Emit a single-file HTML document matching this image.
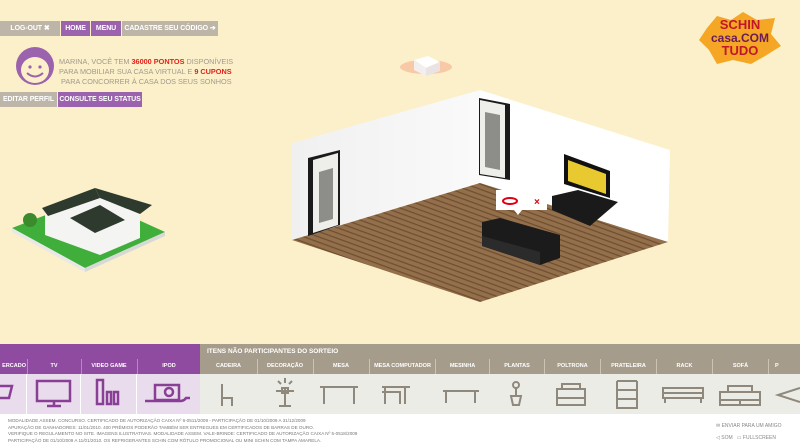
<!DOCTYPE html>
<html><head><meta charset="utf-8"><style>
*{margin:0;padding:0;box-sizing:border-box}
body{width:800px;height:448px;overflow:hidden;background:#fbf0c9;font-family:"Liberation Sans",sans-serif;position:relative}
.a{position:absolute}
.btn{position:absolute;height:15px;font-size:7px;font-weight:bold;color:#fff;line-height:15px;text-align:center;letter-spacing:-.1px}
.g{background:#bdb6a8}.p{background:#9b62ad}
.msg{position:absolute;left:59px;font-size:7.3px;color:#a39a8c;line-height:10px}
.msg b{color:#e2231a}
.hd{position:absolute;top:359px;height:15px;font-size:5.5px;font-weight:bold;color:#fff;line-height:15px;text-align:center;white-space:nowrap;overflow:hidden}
.foot{position:absolute;left:8px;top:418px;font-size:4.6px;color:#777;line-height:6.6px;white-space:nowrap}
</style></head><body>
<div class="a" style="left:0;top:414px;width:800px;height:34px;background:#fff"></div>
<div class="btn g" style="left:0;top:21px;width:60px">LOG-OUT ✖</div>
<div class="btn p" style="left:61px;top:21px;width:29px">HOME</div>
<div class="btn p" style="left:91px;top:21px;width:30px">MENU</div>
<div class="btn g" style="left:122px;top:21px;width:96px">CADASTRE SEU CÓDIGO ➔</div>
<svg class="a" style="left:14px;top:46px" width="46" height="40" viewBox="0 0 46 40">
<circle cx="21" cy="20" r="19" fill="#9b62ad"/>
<ellipse cx="21" cy="24" rx="14" ry="13" fill="#fbf0c9"/>
<circle cx="16" cy="21" r="1.6" fill="#9b62ad"/><circle cx="26" cy="21" r="1.6" fill="#9b62ad"/>
<path d="M13 27 Q21 34 29 27" stroke="#9b62ad" stroke-width="2" fill="none"/></svg>
<div class="msg" style="top:57px">MARINA, VOCÊ TEM <b>36000 PONTOS</b> DISPONÍVEIS</div>
<div class="msg" style="top:67px">PARA MOBILIAR SUA CASA VIRTUAL E <b>9 CUPONS</b></div>
<div class="msg" style="top:77px;left:61px">PARA CONCORRER À CASA DOS SEUS SONHOS</div>
<div class="btn g" style="left:0;top:92px;width:57px">EDITAR PERFIL</div>
<div class="btn p" style="left:58px;top:92px;width:84px">CONSULTE SEU STATUS</div>

<svg class="a" style="left:695px;top:8px" width="90" height="60" viewBox="0 0 90 60">
<path d="M12 20 L22 8 L36 12 L48 4 L62 12 L80 10 L76 26 L86 38 L70 48 L56 56 L38 52 L22 56 L14 42 L4 32Z" fill="#f4a624"/>
<text x="45" y="21" text-anchor="middle" font-size="13" font-weight="bold" fill="#c0172d" font-family="Liberation Sans">SCHIN</text>
<text x="45" y="34" text-anchor="middle" font-size="12" font-weight="bold" fill="#6b1a5c" font-family="Liberation Sans">casa.COM</text>
<text x="45" y="47" text-anchor="middle" font-size="13" font-weight="bold" fill="#c0172d" font-family="Liberation Sans">TUDO</text></svg>

<svg class="a" style="left:396px;top:52px" width="60" height="30"><ellipse cx="30" cy="15" rx="26" ry="7" fill="#f7c9a6"/><path d="M18 8 L32 4 L44 10 L30 16Z" fill="#fff"/><path d="M18 8 L30 16 L30 24 L18 18Z" fill="#f4efef"/><path d="M30 16 L44 10 L44 19 L30 24Z" fill="#e9e3e3"/></svg>

<svg class="a" style="left:0;top:0" width="800" height="340">
<defs><pattern id="w" width="8" height="5" patternUnits="userSpaceOnUse" patternTransform="rotate(20)"><rect width="8" height="5" fill="#93704b"/><rect y="3" width="8" height="1.2" fill="#6e4d30"/></pattern>
<linearGradient id="lw" x1="0" x2="1"><stop offset="0" stop-color="#f0f0f0"/><stop offset="1" stop-color="#fafafa"/></linearGradient></defs>
<polygon points="292,143 480,90 480,183 292,240" fill="url(#lw)"/>
<polygon points="480,90 670,150 668,242 480,183" fill="#fff"/>
<polygon points="292,240 480,183 668,242 480,302" fill="url(#w)"/>
<polygon points="308,158 340,150 340,225 308,236" fill="#1a1a1a"/>
<polygon points="313,160 338,153 338,225 313,233" fill="#eeeeea"/>
<polygon points="319,172 333,168 333,219 319,223" fill="#8d8d8a"/>
<polygon points="479,98 510,104 510,180 479,175" fill="#1a1a1a"/>
<polygon points="480,100 505,105 505,178 480,174" fill="#eeeeea"/>
<polygon points="485,112 500,115 500,170 485,167" fill="#8d8d8a"/>
<polygon points="564,154 610,171 610,198 564,184" fill="#111"/>
<polygon points="568,160 606,174 606,194 568,181" fill="#e8c930"/>
<polygon points="552,196 578,190 618,202 590,226 552,210" fill="#1a1a1a"/>
<polygon points="482,222 500,218 560,235 560,258 540,265 482,246" fill="#1b1b1b"/>
<polygon points="482,236 540,252 540,265 482,246" fill="#2b2b2b"/>
<rect x="496" y="190" width="51" height="20" fill="#fff"/>
<polygon points="514,210 522,210 518,215" fill="#fff"/>
<ellipse cx="510" cy="201" rx="7" ry="3" fill="none" stroke="#d01" stroke-width="2"/>
<text x="534" y="205" font-size="10" font-weight="bold" fill="#d01" font-family="Liberation Sans">×</text>
<polygon points="12,228 90,198 165,232 85,268" fill="#3fae3a"/>
<polygon points="12,228 85,268 85,272 12,232" fill="#e8e8e8"/>
<polygon points="85,268 165,232 165,236 85,272" fill="#d8d8d8"/>
<polygon points="45,210 95,190 140,210 140,238 100,255 45,235" fill="#f4f4f2"/>
<polygon points="42,208 95,188 100,198 48,216" fill="#2f3a2e"/>
<polygon points="95,188 152,205 140,214 100,198" fill="#2f3a2e"/>
<polygon points="70,218 100,205 125,220 95,233" fill="#2f3a2e"/>
<circle cx="30" cy="220" r="7" fill="#3b8a2c"/>
</svg>

<div class="a" style="left:0;top:344px;width:200px;height:15px;background:#8f4b9f"></div>
<div class="a" style="left:200px;top:344px;width:600px;height:15px;background:#a69c8b;font-size:6.5px;font-weight:bold;color:#fff;line-height:15px;padding-left:7px">ITENS NÃO PARTICIPANTES DO SORTEIO</div>
<div class="a" style="left:0;top:359px;width:200px;height:55px;background:#8f4b9f"></div>
<div class="a" style="left:200px;top:359px;width:600px;height:55px;background:#a69c8b"></div>
<div class="a" style="left:0;top:374px;width:200px;height:40px;background:#e9dcec"></div>
<div class="a" style="left:200px;top:374px;width:600px;height:40px;background:#ececE7"></div>
<div class="hd" style="left:0;width:26px;text-align:right">ERCADO</div>
<div class="hd" style="left:27px;width:53px;border-left:1px solid #b888c4">TV</div>
<div class="hd" style="left:81px;width:55px;border-left:1px solid #b888c4">VIDEO GAME</div>
<div class="hd" style="left:137px;width:63px;border-left:1px solid #b888c4">IPOD</div>
<div class="hd" style="left:201px;width:55px">CADEIRA</div>
<div class="hd" style="left:257px;width:55px;border-left:1px solid #ccc3b2">DECORAÇÃO</div>
<div class="hd" style="left:313px;width:55px;border-left:1px solid #ccc3b2">MESA</div>
<div class="hd" style="left:369px;width:66px;border-left:1px solid #ccc3b2">MESA COMPUTADOR</div>
<div class="hd" style="left:435px;width:54px;border-left:1px solid #ccc3b2">MESINHA</div>
<div class="hd" style="left:489px;width:55px;border-left:1px solid #ccc3b2">PLANTAS</div>
<div class="hd" style="left:544px;width:56px;border-left:1px solid #ccc3b2">POLTRONA</div>
<div class="hd" style="left:600px;width:56px;border-left:1px solid #ccc3b2">PRATELEIRA</div>
<div class="hd" style="left:656px;width:56px;border-left:1px solid #ccc3b2">RACK</div>
<div class="hd" style="left:712px;width:56px;border-left:1px solid #ccc3b2">SOFÁ</div>
<div class="hd" style="left:768px;width:32px;border-left:1px solid #ccc3b2;text-align:left;padding-left:6px">P</div>
<svg class="a" style="left:0;top:374px" width="800" height="40">
<g stroke="#fff" stroke-width="1"><line x1="26.5" y1="0" x2="26.5" y2="40"/><line x1="80.5" y1="0" x2="80.5" y2="40"/><line x1="136.5" y1="0" x2="136.5" y2="40"/></g>
<g fill="none" stroke="#8a3f96" stroke-width="2.5">
<path d="M0 12 H12 L9 24 H0"/><rect x="37" y="7" width="33" height="20"/><path d="M47 32 H61 M54 27 V32"/>
<rect x="97" y="6" width="6" height="24"/><rect x="107" y="18" width="4" height="12"/><rect x="114" y="18" width="4" height="12"/>
<rect x="155" y="11" width="24" height="15"/><circle cx="169" cy="18" r="4"/><path d="M145 27 H180 Q184 27 186 24 L190 24"/></g>
<g fill="none" stroke="#8f887c" stroke-width="2">
<path d="M222 10 V32 M222 24 H232 V32"/>
<path d="M285 13 V32 M279 32 H291 M276 17 H294 M285 4 V9 M278 7 L281 10 M292 7 L289 10"/><rect x="282" y="14" width="6" height="5"/>
<path d="M320 13 H358 M324 13 V30 M354 13 V30"/>
<path d="M382 13 H410 M385 13 V30 M405 13 V30 M382 18 H400 V30"/>
<path d="M443 17 H479 M446 17 V29 M475 17 V29"/>
<circle cx="516" cy="11" r="3"/><path d="M516 14 V22 M511 22 H521 L519 31 H513Z"/>
<path d="M557 15 H585 V31 H557Z M562 15 V10 H580 V15 M557 24 H585"/>
<path d="M617 7 V35 M637 7 V35 M617 7 H637 M617 16 H637 M617 25 H637 M617 34 H637"/>
<path d="M663 14 H703 V24 H663Z M663 19 H703 M665 24 V29 M701 24 V29"/>
<path d="M720 18 H760 V31 H720Z M728 18 V12 H752 V18 M720 26 H760 M740 26 V31"/>
<path d="M800 14 L778 21 L800 28"/></g></svg>

<div class="foot">MODALIDADE ASSEM. CONCURSO. CERTIFICADO DE AUTORIZAÇÃO CAIXA Nº 6-0511/2009 - PARTICIPAÇÃO DE 01/10/2009 A 31/12/2009<br>APURAÇÃO DE GANHADORES: 11/01/2010. 400 PRÊMIOS PODERÃO TAMBÉM SER ENTREGUES EM CERTIFICADOS DE BARRAS DE OURO.<br>VERIFIQUE O REGULAMENTO NO SITE. IMAGENS ILUSTRATIVAS. MODALIDADE ASSEM. VALE-BRINDE: CERTIFICADO DE AUTORIZAÇÃO CAIXA Nº 5-0518/2009<br>PARTICIPAÇÃO DE 01/10/2009 A 11/01/2010. OS REFRIGERANTES SCHIN COM RÓTULO PROMOCIONAL OU MINI SCHIN COM TAMPA AMARELA.</div>
<div class="a" style="left:716px;top:423px;font-size:5px;color:#888">✉ ENVIAR PARA UM AMIGO</div>
<div class="a" style="left:716px;top:435px;font-size:5px;color:#888">◁ SOM &nbsp; ▭ FULLSCREEN</div>
</body></html>
